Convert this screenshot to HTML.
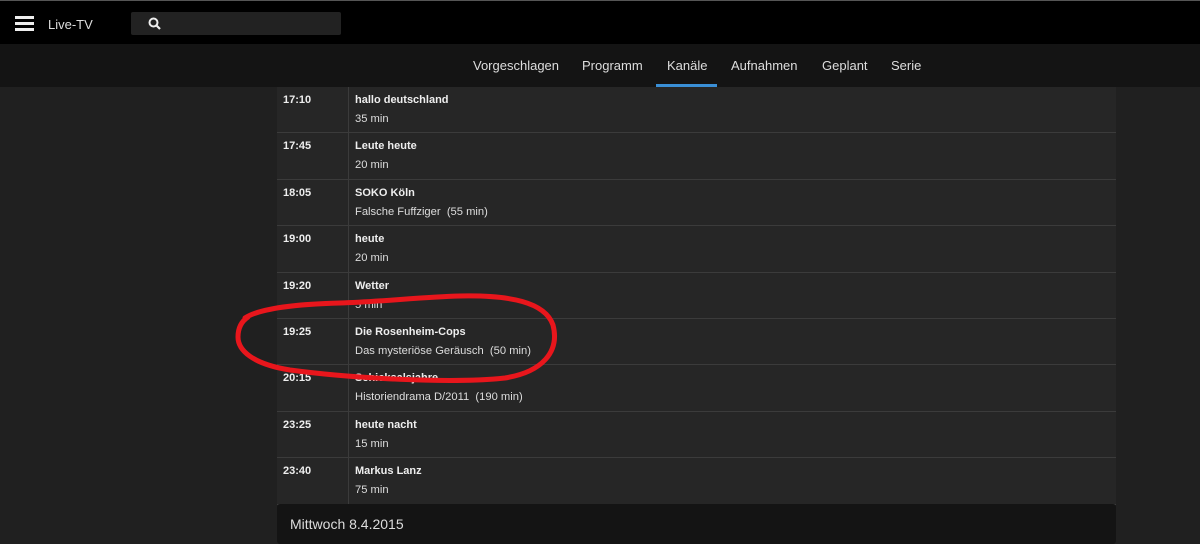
<!DOCTYPE html><html><head><style>
body{margin:0;width:1200px;height:534px;overflow:hidden;background:#202020;font-family:"Liberation Sans",sans-serif;color:#ddd;position:relative}
.top{position:absolute;left:0;top:0;width:1200px;height:44px;background:#000;border-top:1px solid #555;box-sizing:border-box}
.nav{position:absolute;left:0;top:44px;width:1200px;height:43px;background:#141414}
.nav span{position:absolute;top:14px;font-size:13px;color:#ddd}
.ul{position:absolute;left:656px;top:40px;width:61px;height:3px;background:#3a8fd6}
.list{position:absolute;left:277px;top:87px;width:839px;background:#262626}
.row{height:46.4px;border-bottom:1px solid #3b3b3b;box-sizing:border-box;position:relative}
.row .t{position:absolute;left:6px;top:7px;font-size:11px;font-weight:bold;color:#eee}
.row .d{position:absolute;left:71px;top:0;height:100%;border-left:1px solid #3b3b3b;padding-left:6px}
.row b{display:block;font-size:11px;margin-top:7px;color:#eee}
.row i{display:block;font-style:normal;font-size:11.2px;margin-top:7px;color:#ddd}
.day{position:absolute;left:277px;top:504px;width:839px;height:40px;background:#141414;border-radius:3px}
.day span{position:absolute;left:13px;top:12px;font-size:14px;color:#ddd}
</style></head><body>
<div class="top">
<div style="position:absolute;left:15px;top:15px;width:19px;height:3px;background:#eee;box-shadow:0 6px 0 #eee,0 12px 0 #eee"></div>
<div style="position:absolute;left:48px;top:16px;font-size:13px;color:#ddd">Live-TV</div>
<div style="position:absolute;left:131px;top:11px;width:210px;height:23px;background:#222;border-radius:2px">
<svg width="14" height="14" style="position:absolute;left:17px;top:5px" viewBox="0 0 14 14"><circle cx="5.5" cy="5.5" r="4" fill="none" stroke="#eee" stroke-width="2"/><path d="M8.5 8.5L12 12" stroke="#eee" stroke-width="2.2"/></svg></div>
</div>
<div class="nav">
<span style="left:473px">Vorgeschlagen</span><span style="left:582px">Programm</span><span style="left:667px">Kanäle</span><span style="left:731px">Aufnahmen</span><span style="left:822px">Geplant</span><span style="left:891px">Serie</span>
<div class="ul"></div></div>
<div class="list">
<div class="row"><div class="t">17:10</div><div class="d"><b>hallo deutschland</b><i>35 min</i></div></div>
<div class="row"><div class="t">17:45</div><div class="d"><b>Leute heute</b><i>20 min</i></div></div>
<div class="row"><div class="t">18:05</div><div class="d"><b>SOKO Köln</b><i>Falsche Fuffziger&nbsp; (55 min)</i></div></div>
<div class="row"><div class="t">19:00</div><div class="d"><b>heute</b><i>20 min</i></div></div>
<div class="row"><div class="t">19:20</div><div class="d"><b>Wetter</b><i>5 min</i></div></div>
<div class="row"><div class="t">19:25</div><div class="d"><b>Die Rosenheim-Cops</b><i>Das mysteriöse Geräusch&nbsp; (50 min)</i></div></div>
<div class="row"><div class="t">20:15</div><div class="d"><b>Schicksalsjahre</b><i>Historiendrama D/2011&nbsp; (190 min)</i></div></div>
<div class="row"><div class="t">23:25</div><div class="d"><b>heute nacht</b><i>15 min</i></div></div>
<div class="row"><div class="t">23:40</div><div class="d"><b>Markus Lanz</b><i>75 min</i></div></div>
</div>
<div class="day"><span>Mittwoch 8.4.2015</span></div>
<svg width="1200" height="534" style="position:absolute;left:0;top:0"><path d="M245 318 C260 308 300 304 340 303 C380 302 420 297 460 296 C510 295 545 302 553 325 C560 352 542 372 505 378 C450 384 350 378 290 370 C252 364 238 350 238 337 C238 327 242 321 248 317" fill="none" stroke="#e8161c" stroke-width="5" stroke-linecap="round"/></svg>
</body></html>
